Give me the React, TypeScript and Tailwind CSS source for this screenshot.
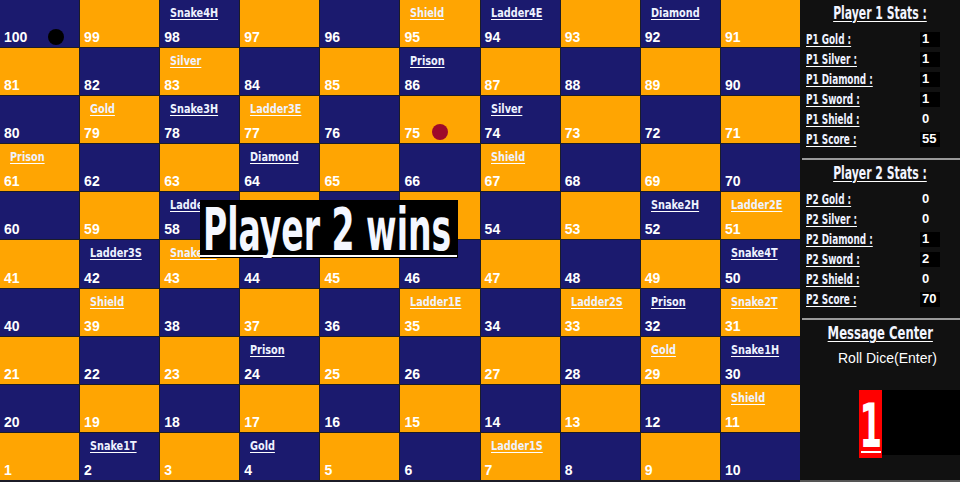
const labels: Record<number, string> = {
  98: "Snake4H",
  95: "Shield",
  94: "Ladder4E",
  92: "Diamond",
  83: "Silver",
  86: "Prison",
  79: "Gold",
  78: "Snake3H",
  77: "Ladder3E",
  74: "Silver",
  61: "Prison",
  64: "Diamond",
  67: "Shield",
  58: "Ladder4S",
  52: "Snake2H",
  51: "Ladder2E",
  42: "Ladder3S",
  43: "Snake3T",
  50: "Snake4T",
  39: "Shield",
  35: "Ladder1E",
  33: "Ladder2S",
  32: "Prison",
  31: "Snake2T",
  24: "Prison",
  29: "Gold",
  30: "Snake1H",
  11: "Shield",
  2: "Snake1T",
  4: "Gold",
  7: "Ladder1S",
};

const p1Stats = [
  { label: "P1 Gold :", value: "1" },
  { label: "P1 Silver :", value: "1" },
  { label: "P1 Diamond :", value: "1" },
  { label: "P1 Sword :", value: "1" },
  { label: "P1 Shield :", value: "0" },
  { label: "P1 Score :", value: "55" },
];

const p2Stats = [
  { label: "P2 Gold :", value: "0" },
  { label: "P2 Silver :", value: "0" },
  { label: "P2 Diamond :", value: "1" },
  { label: "P2 Sword :", value: "2" },
  { label: "P2 Shield :", value: "0" },
  { label: "P2 Score :", value: "70" },
];

// no Impact here, so condensed DejaVu squeezed a bit further
const narrow = "font-['DejaVu_Sans',sans-serif] font-stretch-condensed font-bold whitespace-nowrap";

function cellNumber(r: number, c: number) {
  const fromBottom = 9 - r;
  return fromBottom % 2 === 0 ? fromBottom * 10 + c + 1 : fromBottom * 10 + 10 - c;
}

function Cell({ r, c }: { r: number; c: number }) {
  const n = cellNumber(r, c);
  const navy = (r + c) % 2 === 0;
  const label = labels[n];
  return (
    <div
      className={`relative flex flex-col justify-between ${
        navy ? "bg-[#1b1a6e]" : "bg-[#ffa502]"
      }`}
    >
      <div className="flex h-5 pl-2.5 pt-[5px]">
        {label && (
          <span
            className={`inline-block h-4 origin-left scale-x-[0.83] text-[13px] leading-4 text-[#eef2ff] underline decoration-white underline-offset-2 ${narrow}`}
          >
            {label}
          </span>
        )}
      </div>
      <div className="pb-[2px] pl-1 font-['Liberation_Sans',sans-serif] text-[14px] font-bold leading-4 text-white">
        {n}
      </div>
      {n === 100 && (
        <span className="absolute left-[48px] top-[29px] h-4 w-4 rounded-full bg-black" />
      )}
      {n === 75 && (
        <span className="absolute left-[32px] top-[28px] h-4 w-4 rounded-full bg-[#9e0a2a]" />
      )}
    </div>
  );
}

function Title({ text, squeeze }: { text: string; squeeze: string }) {
  return (
    <div className="flex h-5 justify-center">
      <span
        className={`inline-block ${squeeze} text-[17px] leading-5 text-[#f2f5ff] underline decoration-white underline-offset-2 ${narrow}`}
      >
        {text}
      </span>
    </div>
  );
}

function StatBlock({ title, stats }: { title: string; stats: { label: string; value: string }[] }) {
  return (
    <div className="h-[158px] pt-[3px]">
      <Title text={title} squeeze="scale-x-[0.71]" />
      <div className="mt-[6px]">
        {stats.map((s) => (
          <div key={s.label} className="flex h-5 items-center pl-[6px]">
            <div className="flex w-[114px] items-center">
              <span
                className={`inline-block origin-left scale-x-[0.73] text-[13.5px] leading-4 text-[#eef2ff] underline decoration-white underline-offset-2 ${narrow}`}
              >
                {s.label}
              </span>
            </div>
            <span
              className={`flex h-[15px] w-[20px] items-center pl-[2px] font-['Liberation_Sans',sans-serif] text-[13px] font-bold text-white ${
                s.value !== "0" ? "bg-black" : ""
              }`}
            >
              {s.value}
            </span>
          </div>
        ))}
      </div>
    </div>
  );
}

export default function App() {
  const rows = Array.from({ length: 10 }, (_, i) => i);
  return (
    <div className="flex h-[482px] w-[960px] overflow-hidden bg-[#111111]">
      <div className="relative h-[482px] w-[800px] bg-[#1c1c28]">
        <div className="grid h-[480px] w-[800px] grid-cols-10 grid-rows-10 gap-px">
          {rows.map((r) => rows.map((c) => <Cell key={`${r}-${c}`} r={r} c={c} />))}
        </div>
        <div className="absolute left-[200px] top-[200px] flex h-[58px] w-[258px] flex-col overflow-hidden bg-black">
          <div className="mt-[5px] h-[50px] pl-[3px]">
            <span
              className={`inline-block origin-left scale-x-[0.634] text-[58px] leading-[50px] text-[#f4f7ff] ${narrow}`}
            >
              Player 2 wins
            </span>
          </div>
          <div className="h-[2px] w-[257px] bg-white" />
        </div>
      </div>

      <div className="flex w-[160px] flex-col bg-[#111111]">
        <StatBlock title="Player 1 Stats :" stats={p1Stats} />
        <div className="ml-[2px] h-[2px] bg-[#9a9a9a]" />
        <StatBlock title="Player 2 Stats :" stats={p2Stats} />
        <div className="ml-[2px] h-[2px] bg-[#9a9a9a]" />
        <div className="flex flex-1 flex-col pt-[3px]">
          <Title text="Message Center" squeeze="scale-x-[0.76]" />
          <div className="mt-[5px] h-5 pl-[38px] font-['Liberation_Sans',sans-serif] text-[14px] leading-5 text-white">
            Roll Dice(Enter)
          </div>
          <div className="mt-[22px] flex h-[68px]">
            <div className="ml-[59px] flex w-[23px] flex-col items-center overflow-hidden bg-[#ff0000]">
              <span
                className={`mt-[11px] inline-block h-[50px] scale-x-[0.6] text-[60px] leading-[50px] text-white ${narrow}`}
              >
                1
              </span>
              <span className="h-[2px] w-[20px] bg-white" />
            </div>
            <div className="h-[65px] flex-1 bg-black" />
          </div>
          <div className="mt-auto h-[2px] bg-[#555555]" />
        </div>
      </div>
    </div>
  );
}
